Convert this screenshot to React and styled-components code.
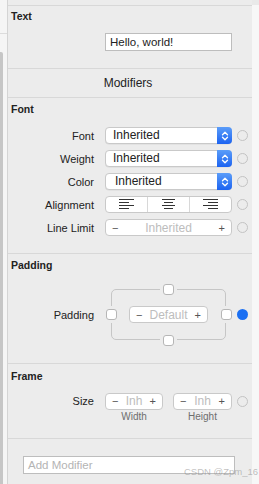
import React from "react";
import styled, { createGlobalStyle } from "styled-components";

const GlobalStyle = createGlobalStyle`
  body {
    margin: 0;
    background: #ececec;
    font-family: "Liberation Sans", Arial, sans-serif;
    color: #222;
  }
`;

const Screen = styled.div`
  position: relative;
  display: flex;
  width: 259px;
  height: 484px;
  overflow: hidden;
`;

const Gutter = styled.div`
  width: 7px;
  display: flex;
  flex-direction: column;
  background: #f5f5f5;
`;

const GutterTop = styled.div`
  height: 33px;
  border-bottom: 1px solid #dcdcdc;
`;

const GutterBody = styled.div`
  flex: 1;
  display: flex;
  padding-top: 18px;
`;

const Thumb = styled.div`
  width: 3px;
  background: #c6c6c6;
  border-radius: 0 2px 0 0;
`;

const RightGutter = styled.div`
  width: 7px;
  background: #f7f7f7;
  border-top: 5px solid #e9e9e9;
`;

const Panel = styled.div`
  width: 244px;
  display: flex;
  flex-direction: column;
  border-left: 1px solid #d4d4d4;
  background: #ececec;
`;

const TopStrip = styled.div`
  height: 5px;
  border-bottom: 1px solid #d8d8d8;
`;

const Section = styled.section`
  box-sizing: border-box;
  height: ${(p) => (p.$h ? `${p.$h}px` : "auto")};
  flex: ${(p) => (p.$h ? "none" : 1)};
  padding-top: ${(p) => p.$pt ?? 4}px;
  border-bottom: ${(p) => (p.$last ? "none" : "1px solid #d8d8d8")};
  display: flex;
  flex-direction: column;
`;

const Header = styled.div`
  font-size: 10.5px;
  font-weight: bold;
  line-height: 14px;
  margin-left: 3px;
  margin-bottom: ${(p) => p.$mb ?? 11}px;
`;

const Centered = styled.div`
  font-size: 12px;
  line-height: 28px;
  text-align: center;
  padding-right: 4px;
`;

const Rows = styled.div`
  display: flex;
  flex-direction: column;
  gap: 6px;
`;

const Row = styled.div`
  display: flex;
  align-items: center;
  height: ${(p) => p.$h ?? 17}px;
`;

const Label = styled.div`
  width: 86px;
  margin-right: 11px;
  text-align: right;
  font-size: 11px;
`;

const Field = styled.div`
  box-sizing: border-box;
  width: ${(p) => p.$w ?? 127}px;
  height: 18px;
  margin-left: ${(p) => p.$ml ?? 97}px;
  background: #fff;
  border: 1px solid #bdbdbd;
  padding-left: 4px;
  font-size: 11.5px;
  line-height: 16px;
  color: ${(p) => (p.$placeholder ? "#b4b4b4" : "#222")};
`;

const Popup = styled.div`
  box-sizing: border-box;
  width: 127px;
  height: 17px;
  display: flex;
  background: #fff;
  border: 1px solid #c9c9c9;
  border-radius: 4px;
  box-shadow: 0 0.5px 0 rgba(0, 0, 0, 0.08);
`;

const PopupText = styled.span`
  flex: 1;
  padding-left: ${(p) => p.$pad ?? 7}px;
  font-size: 12px;
  line-height: 15px;
`;

const PopupArrow = styled.span`
  width: 15px;
  margin: -1px -1px -1px 0;
  border-radius: 0 4px 4px 0;
  background: linear-gradient(#5b9df9, #1c63f1);
  display: flex;
  align-items: center;
  justify-content: center;
`;

const Indicator = styled.span`
  box-sizing: border-box;
  width: 11px;
  height: 11px;
  margin-left: 5px;
  border-radius: 50%;
  border: ${(p) => (p.$on ? "none" : "1px solid #c3c3c3")};
  background: ${(p) => (p.$on ? "#1a6ff2" : "transparent")};
`;

const Segmented = styled.div`
  box-sizing: border-box;
  width: 127px;
  height: 17px;
  display: flex;
  background: #fff;
  border: 1px solid #c9c9c9;
  border-radius: 4px;
`;

const Segment = styled.div`
  flex: 1;
  display: flex;
  align-items: center;
  justify-content: center;
  & + & {
    border-left: 1px solid #d8d8d8;
  }
`;

const Stepper = styled.div`
  box-sizing: border-box;
  width: ${(p) => p.$w}px;
  height: 17px;
  display: flex;
  align-items: center;
  padding: 0 6px;
  background: #fff;
  border: 1px solid #c9c9c9;
  border-radius: 4px;
  font-size: 12px;
`;

const StepSign = styled.span`
  color: #555;
  font-size: 11px;
`;

const StepValue = styled.span`
  flex: 1;
  text-align: center;
  color: #bdbdbd;
`;

const PadBox = styled.div`
  position: relative;
  width: 127px;
  height: 63px;
  display: grid;
  grid-template-columns: 12px 1fr 12px;
  grid-template-rows: 12px 1fr 12px;
  &::before {
    content: "";
    position: absolute;
    inset: 6px;
    border: 1px solid #c6c6c6;
    border-radius: 5px;
  }
`;

const Check = styled.span`
  position: relative;
  z-index: 1;
  box-sizing: border-box;
  width: 11px;
  height: 11px;
  background: #fff;
  border: 1px solid #b6b6b6;
  border-radius: 3px;
  box-shadow: 0 0 0 3px #ececec;
  grid-column: ${(p) => p.$col};
  grid-row: ${(p) => p.$row};
  justify-self: center;
  align-self: center;
`;

const PadCenter = styled.div`
  position: relative;
  z-index: 1;
  grid-column: 2;
  grid-row: 2;
  display: flex;
  align-items: center;
  justify-content: center;
`;

const Pair = styled.div`
  display: flex;
  gap: 10px;
`;

const SubLabels = styled.div`
  display: flex;
  gap: 10px;
  margin: 1px 0 0 97px;
`;

const SubLabel = styled.span`
  width: ${(p) => p.$w}px;
  text-align: center;
  font-size: 10px;
  line-height: 12px;
  color: #6e6e6e;
`;

const Watermark = styled.div`
  position: absolute;
  right: 1px;
  top: 466px;
  font-size: 9.5px;
  color: rgba(140, 140, 140, 0.55);
  white-space: nowrap;
`;

const Chevrons = () => (
  <svg width="8" height="12" viewBox="0 0 8 12">
    <path d="M1.5 4.8 L4 2.3 L6.5 4.8 M1.5 7.2 L4 9.7 L6.5 7.2" fill="none" stroke="#fff" strokeWidth="1.3" strokeLinecap="round" strokeLinejoin="round" />
  </svg>
);

const AlignIcon = ({ kind }) => {
  const long = kind === "center" ? 13 : 15;
  const short = kind === "center" ? 9 : 10;
  const x = (w) => (kind === "left" ? 0 : kind === "right" ? 15 - w : (15 - w) / 2);
  const widths = [long, short, long, short];
  return (
    <svg width="15" height="11" viewBox="0 0 15 11">
      {widths.map((w, i) => (
        <rect key={i} x={x(w)} y={i * 3} width={w} height="1" fill="#333" />
      ))}
    </svg>
  );
};

const PopupRow = ({ label, pad }) => (
  <Row>
    <Label>{label}</Label>
    <Popup>
      <PopupText $pad={pad}>Inherited</PopupText>
      <PopupArrow>
        <Chevrons />
      </PopupArrow>
    </Popup>
    <Indicator />
  </Row>
);

const StepperBox = ({ w, value }) => (
  <Stepper $w={w}>
    <StepSign>−</StepSign>
    <StepValue>{value}</StepValue>
    <StepSign>+</StepSign>
  </Stepper>
);

export default function App() {
  return (
    <Screen>
      <GlobalStyle />
      <Gutter>
        <GutterTop />
        <GutterBody>
          <Thumb />
        </GutterBody>
      </Gutter>
      <Panel>
        <TopStrip />
        <Section $h={63} $pt={3}>
          <Header $mb={10}>Text</Header>
          <Field>Hello, world!</Field>
        </Section>
        <Section $h={29} $pt={0}>
          <Centered>Modifiers</Centered>
        </Section>
        <Section $h={156}>
          <Header>Font</Header>
          <Rows>
            <PopupRow label="Font" />
            <PopupRow label="Weight" />
            <PopupRow label="Color" pad={9} />
            <Row>
              <Label>Alignment</Label>
              <Segmented>
                <Segment>
                  <AlignIcon kind="left" />
                </Segment>
                <Segment>
                  <AlignIcon kind="center" />
                </Segment>
                <Segment>
                  <AlignIcon kind="right" />
                </Segment>
              </Segmented>
              <Indicator />
            </Row>
            <Row>
              <Label>Line Limit</Label>
              <StepperBox w={127} value="Inherited" />
              <Indicator />
            </Row>
          </Rows>
        </Section>
        <Section $h={110}>
          <Header>Padding</Header>
          <Row $h={63}>
            <Label>Padding</Label>
            <PadBox>
              <Check $col={2} $row={1} />
              <Check $col={1} $row={2} />
              <PadCenter>
                <StepperBox w={79} value="Default" />
              </PadCenter>
              <Check $col={3} $row={2} />
              <Check $col={2} $row={3} />
            </PadBox>
            <Indicator $on />
          </Row>
        </Section>
        <Section $h={75} $pt={5}>
          <Header $mb={9}>Frame</Header>
          <Row $h={18}>
            <Label>Size</Label>
            <Pair>
              <StepperBox w={58} value="Inh" />
              <StepperBox w={59} value="Inh" />
            </Pair>
            <Indicator />
          </Row>
          <SubLabels>
            <SubLabel $w={58}>Width</SubLabel>
            <SubLabel $w={59}>Height</SubLabel>
          </SubLabels>
        </Section>
        <Section $last $pt={17}>
          <Field $ml={15} $w={212} $placeholder>
            Add Modifier
          </Field>
        </Section>
      </Panel>
      <RightGutter />
      <Watermark>CSDN @Zpm_16</Watermark>
    </Screen>
  );
}
